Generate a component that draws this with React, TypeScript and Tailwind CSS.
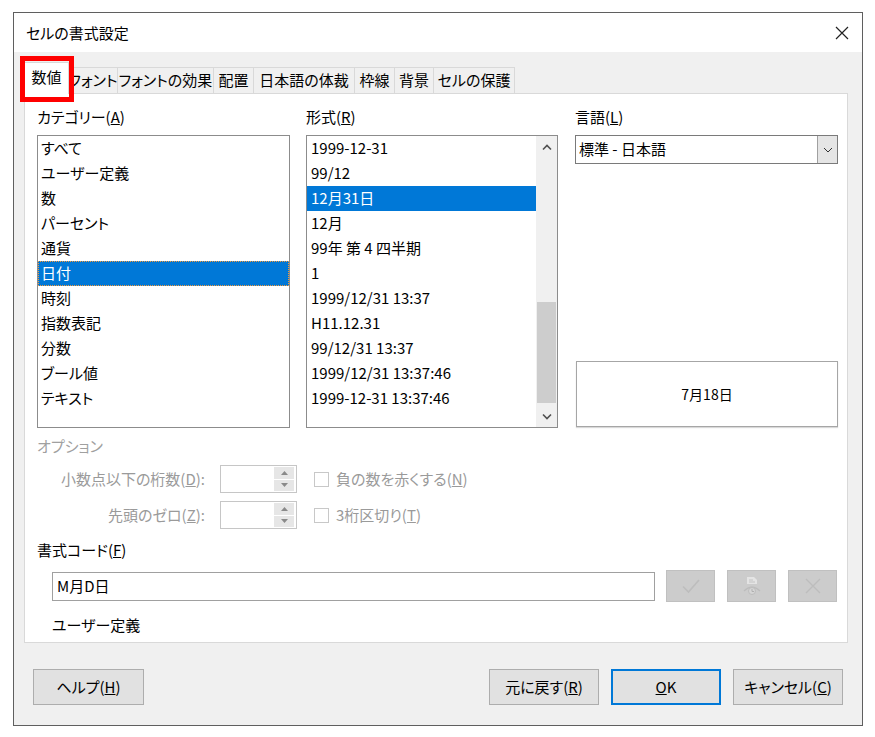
import React from "react";

const F = "font-['Noto_Sans_CJK_JP',sans-serif] [font-feature-settings:'palt']";

const categories = ["すべて", "ユーザー定義", "数", "パーセント", "通貨", "日付", "時刻", "指数表記", "分数", "ブール値", "テキスト"];
const formats = [
  "1999-12-31",
  "99/12",
  "12月31日",
  "12月",
  "99年 第 4 四半期",
  "1",
  "1999/12/31 13:37",
  "H11.12.31",
  "99/12/31 13:37",
  "1999/12/31 13:37:46",
  "1999-12-31 13:37:46",
];

const tabs: { label: string; w: string }[] = [
  { label: "フォント", w: "w-[49px]" },
  { label: "フォントの効果", w: "w-[96px]" },
  { label: "配置", w: "w-[40px]" },
  { label: "日本語の体裁", w: "w-[101px]" },
  { label: "枠線", w: "w-[40px]" },
  { label: "背景", w: "w-[39px]" },
  { label: "セルの保護", w: "w-[81px]" },
];

function Chevron({ dir }: { dir: "up" | "down" }) {
  return (
    <svg width="10" height="7" viewBox="0 0 10 7">
      {dir === "up" ? (
        <path d="M1 5.5 L5 1.5 L9 5.5" fill="none" stroke="#505050" strokeWidth="1.6" />
      ) : (
        <path d="M1 1.5 L5 5.5 L9 1.5" fill="none" stroke="#505050" strokeWidth="1.6" />
      )}
    </svg>
  );
}

function SpinBox() {
  return (
    <div className="w-[77px] h-[28px] border border-[#c6c6c6] bg-white flex justify-end items-center pr-[2px]">
      <div className="w-[20px] h-[24px] flex flex-col gap-[1px]">
        <div className="flex-1 bg-[#e6e6e6] flex items-center justify-center">
          <svg width="7" height="4" viewBox="0 0 7 4"><path d="M0 4 L3.5 0 L7 4 Z" fill="#8a8a8a" /></svg>
        </div>
        <div className="flex-1 bg-[#e6e6e6] flex items-center justify-center">
          <svg width="7" height="4" viewBox="0 0 7 4"><path d="M0 0 L3.5 4 L7 0 Z" fill="#8a8a8a" /></svg>
        </div>
      </div>
    </div>
  );
}

function Checkbox() {
  return <div className="w-[15px] h-[15px] border border-[#c8c8c8] bg-white" />;
}

export default function App() {
  return (
    <div className={`w-[875px] h-[737px] bg-white pt-[12px] pl-[13px] text-[15px] text-black ${F}`}>
      <div className="relative w-[850px] h-[714px] border border-[#5f5f5f] flex flex-col bg-[#f0f0f0]">
        {/* title bar */}
        <div className="h-[39px] bg-white flex items-center justify-between pl-[12px] pr-[13px]">
          <span className="text-[15px] leading-[20px]">セルの書式設定</span>
          <svg width="14" height="14" viewBox="0 0 14 14">
            <path d="M1 1 L13 13 M13 1 L1 13" stroke="#222" strokeWidth="1.2" />
          </svg>
        </div>

        {/* tabs */}
        <div className="h-[41px] flex items-end pl-[10px]">
          <div className="relative z-10 -mb-px w-[45px] h-[32px] bg-white border border-b-0 border-[#d9d9d9] flex items-center justify-center pb-[2px]">
            数値
          </div>
          {tabs.map((t) => (
            <div
              key={t.label}
              className={`${t.w} h-[26px] border-t border-r border-[#d9d9d9] bg-[#f0f0f0] flex items-center justify-center whitespace-nowrap`}
            >
              {t.label}
            </div>
          ))}
        </div>

        {/* panel */}
        <div className="ml-[10px] w-[824px] h-[550px] bg-white border border-[#d9d9d9] pl-[12px] pt-[13px] flex flex-col">
          <div className="flex">
            {/* category */}
            <div className="w-[253px] flex flex-col">
              <div className="h-[20px] leading-[20px] mb-[8px]">
                カテゴリー(<u>A</u>)
              </div>
              <div className="h-[293px] border border-[#8c8c8c] bg-white">
                {categories.map((c) =>
                  c === "日付" ? (
                    <div key={c} className="h-[25px] flex items-center pl-[2px] bg-[#0078d7] text-white border border-dotted border-[#f39a3c]">
                      {c}
                    </div>
                  ) : (
                    <div key={c} className="h-[25px] flex items-center pl-[3px]">
                      {c}
                    </div>
                  )
                )}
              </div>
            </div>

            {/* format */}
            <div className="ml-[16px] w-[252px] flex flex-col">
              <div className="h-[20px] leading-[20px] mb-[8px]">
                形式(<u>R</u>)
              </div>
              <div className="h-[293px] border border-[#8c8c8c] bg-white flex">
                <div className="flex-1">
                  {formats.map((f) => (
                    <div
                      key={f}
                      className={`h-[25px] flex items-center pl-[4px] whitespace-nowrap ${f === "12月31日" ? "bg-[#0078d7] text-white" : ""}`}
                    >
                      {f}
                    </div>
                  ))}
                </div>
                <div className="w-[21px] bg-[#f0f0f0] flex flex-col">
                  <div className="h-[22px] flex items-center justify-center">
                    <Chevron dir="up" />
                  </div>
                  <div className="flex-1 flex flex-col">
                    <div className="mt-[144px] h-[101px] mx-[1px] bg-[#cdcdcd]" />
                  </div>
                  <div className="h-[22px] flex items-center justify-center">
                    <Chevron dir="down" />
                  </div>
                </div>
              </div>
            </div>

            {/* language */}
            <div className="ml-[17px] w-[263px] flex flex-col">
              <div className="h-[20px] leading-[20px] mb-[8px]">
                言語(<u>L</u>)
              </div>
              <div className="h-[29px] border border-[#7a7a7a] bg-white flex items-center">
                <span className="flex-1 pl-[3px]">標準 - 日本語</span>
                <div className="w-[20px] h-full bg-[#e5e5e5] border-l border-[#a0a0a0] flex items-center justify-center">
                  <svg width="10" height="6" viewBox="0 0 10 6">
                    <path d="M1 1 L5 5 L9 1" fill="none" stroke="#333" strokeWidth="1" />
                  </svg>
                </div>
              </div>
              <div className="mt-auto mb-[1px] ml-[1px] w-[262px] h-[66px] border border-[#a6a6a6] bg-white shadow-[0_1px_1px_rgba(0,0,0,0.15)] flex items-center justify-center text-[14px]">
                7月18日
              </div>
            </div>
          </div>

          {/* options */}
          <div className="mt-[8px] h-[20px] leading-[20px] text-[#a0a0a0]">オプション</div>
          <div className="mt-[9px] flex items-center h-[28px] text-[#9a9a9a]">
            <div className="w-[168px] text-right whitespace-nowrap">
              小数点以下の桁数(<u>D</u>):
            </div>
            <div className="ml-[15px]">
              <SpinBox />
            </div>
            <div className="ml-[17px]">
              <Checkbox />
            </div>
            <div className="ml-[7px] whitespace-nowrap">
              負の数を赤くする(<u>N</u>)
            </div>
          </div>
          <div className="mt-[8px] flex items-center h-[28px] text-[#9a9a9a]">
            <div className="w-[168px] text-right whitespace-nowrap">
              先頭のゼロ(<u>Z</u>):
            </div>
            <div className="ml-[15px]">
              <SpinBox />
            </div>
            <div className="ml-[17px]">
              <Checkbox />
            </div>
            <div className="ml-[7px] whitespace-nowrap">
              3桁区切り(<u>T</u>)
            </div>
          </div>

          {/* format code */}
          <div className="mt-[11px] h-[20px] leading-[20px]">
            書式コード(<u>F</u>)
          </div>
          <div className="mt-[10px] flex items-center h-[32px] pl-[15px]">
            <div className="w-[603px] h-[29px] border border-[#a0a0a0] bg-white flex items-center pl-[4px]">
              M月D日
            </div>
            <div className="ml-[11px] w-[49px] h-[32px] bg-[#cccccc] border border-[#c0c0c0] flex items-center justify-center">
              <svg width="20" height="16" viewBox="0 0 20 16">
                <path d="M2 8.5 L7.5 14 L18 2" fill="none" stroke="#bdbdbd" strokeWidth="1.6" />
              </svg>
            </div>
            <div className="ml-[12px] w-[49px] h-[32px] bg-[#cccccc] border border-[#c0c0c0] flex items-center justify-center">
              <svg width="22" height="22" viewBox="0 0 22 22">
                <path d="M6 2 H13 L16 5 V9 H6 Z" fill="#e4e4e4" />
                <path d="M8 5 H12 M8 7 H14" stroke="#c4c4c4" strokeWidth="1" />
                <path d="M3 16 Q11 8 19 16" fill="none" stroke="#bcbcbc" strokeWidth="1.2" />
                <circle cx="11" cy="16" r="3.5" fill="#d6d6d6" stroke="#bdbdbd" strokeWidth="1" />
                <path d="M11 14 V16.5 H13" fill="none" stroke="#b0b0b0" strokeWidth="1" />
              </svg>
            </div>
            <div className="ml-[12px] w-[49px] h-[32px] bg-[#cccccc] border border-[#c0c0c0] flex items-center justify-center">
              <svg width="18" height="18" viewBox="0 0 18 18">
                <path d="M2 2 L16 16 M16 2 L2 16" stroke="#bdbdbd" strokeWidth="1.4" />
              </svg>
            </div>
          </div>
          <div className="mt-[13px] h-[20px] leading-[20px] pl-[15px]">ユーザー定義</div>
        </div>

        {/* bottom buttons */}
        <div className="mt-[26px] flex px-[19px]">
          <div className="w-[111px] h-[36px] bg-[#e1e1e1] border border-[#adadad] flex items-center justify-center">
            ヘルプ(<u>H</u>)
          </div>
          <div className="ml-auto flex gap-[12px]">
            <div className="w-[110px] h-[36px] bg-[#e1e1e1] border border-[#adadad] flex items-center justify-center">
              元に戻す(<u>R</u>)
            </div>
            <div className="w-[110px] h-[36px] bg-[#e1e1e1] border-2 border-[#0078d7] flex items-center justify-center">
              <u>O</u>K
            </div>
            <div className="w-[110px] h-[36px] bg-[#e1e1e1] border border-[#adadad] flex items-center justify-center">
              キャンセル(<u>C</u>)
            </div>
          </div>
        </div>

        {/* red annotation */}
        <div className="absolute left-[6px] top-[43px] w-[54px] h-[46px] border-[5px] border-[#ff0000] z-20 pointer-events-none" />
      </div>
    </div>
  );
}
